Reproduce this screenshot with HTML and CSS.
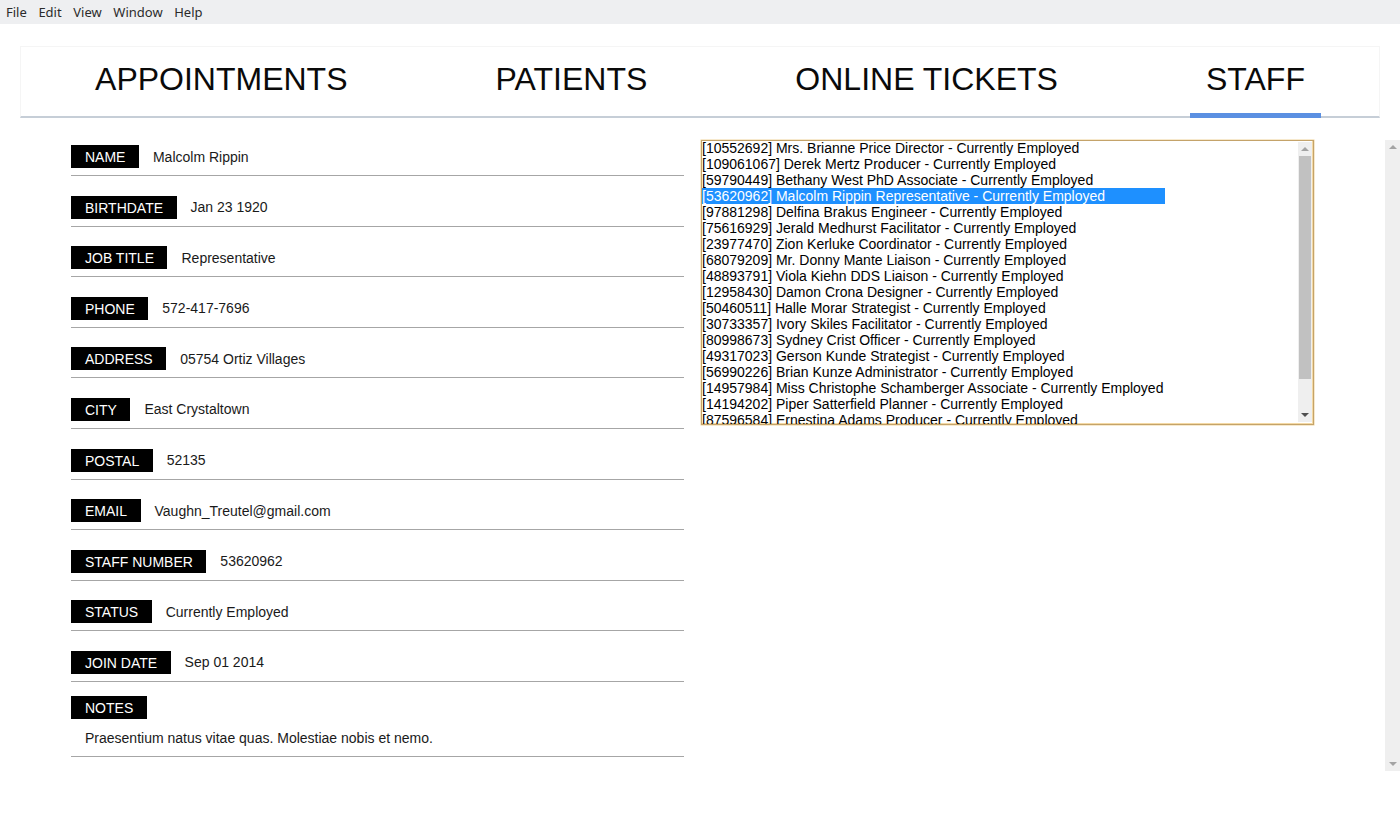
FILE: index.html
```html
<!DOCTYPE html>
<html>
<head>
<meta charset="utf-8">
<title>Staff</title>
<link rel="stylesheet" href="styles.css">
</head>
<body>
<div class="menubar">
  <span class="menu-item">File</span>
  <span class="menu-item">Edit</span>
  <span class="menu-item">View</span>
  <span class="menu-item">Window</span>
  <span class="menu-item">Help</span>
</div>

<div class="page">
  <nav class="tabs">
    <div class="tab">APPOINTMENTS</div>
    <div class="tab">PATIENTS</div>
    <div class="tab">ONLINE TICKETS</div>
    <div class="tab active">STAFF</div>
  </nav>

  <div class="main">
    <div class="content">
      <div class="form">
        <div class="field"><span class="label">NAME</span><span class="value">Malcolm Rippin</span></div>
        <div class="field"><span class="label">BIRTHDATE</span><span class="value">Jan 23 1920</span></div>
        <div class="field"><span class="label">JOB TITLE</span><span class="value">Representative</span></div>
        <div class="field"><span class="label">PHONE</span><span class="value">572-417-7696</span></div>
        <div class="field"><span class="label">ADDRESS</span><span class="value">05754 Ortiz Villages</span></div>
        <div class="field"><span class="label">CITY</span><span class="value">East Crystaltown</span></div>
        <div class="field"><span class="label">POSTAL</span><span class="value">52135</span></div>
        <div class="field"><span class="label">EMAIL</span><span class="value">Vaughn_Treutel@gmail.com</span></div>
        <div class="field"><span class="label">STAFF NUMBER</span><span class="value">53620962</span></div>
        <div class="field"><span class="label">STATUS</span><span class="value">Currently Employed</span></div>
        <div class="field field-last"><span class="label">JOIN DATE</span><span class="value">Sep 01 2014</span></div>
        <div class="notes">
          <span class="label">NOTES</span>
          <p class="notes-text">Praesentium natus vitae quas. Molestiae nobis et nemo.</p>
        </div>
      </div>

      <div class="listbox">
        <div class="list-viewport">
          <div class="list-items">
            <div class="item">[10552692] Mrs. Brianne Price Director - Currently Employed</div>
            <div class="item">[109061067] Derek Mertz Producer - Currently Employed</div>
            <div class="item">[59790449] Bethany West PhD Associate - Currently Employed</div>
            <div class="item selected">[53620962] Malcolm Rippin Representative - Currently Employed</div>
            <div class="item">[97881298] Delfina Brakus Engineer - Currently Employed</div>
            <div class="item">[75616929] Jerald Medhurst Facilitator - Currently Employed</div>
            <div class="item">[23977470] Zion Kerluke Coordinator - Currently Employed</div>
            <div class="item">[68079209] Mr. Donny Mante Liaison - Currently Employed</div>
            <div class="item">[48893791] Viola Kiehn DDS Liaison - Currently Employed</div>
            <div class="item">[12958430] Damon Crona Designer - Currently Employed</div>
            <div class="item">[50460511] Halle Morar Strategist - Currently Employed</div>
            <div class="item">[30733357] Ivory Skiles Facilitator - Currently Employed</div>
            <div class="item">[80998673] Sydney Crist Officer - Currently Employed</div>
            <div class="item">[49317023] Gerson Kunde Strategist - Currently Employed</div>
            <div class="item">[56990226] Brian Kunze Administrator - Currently Employed</div>
            <div class="item">[14957984] Miss Christophe Schamberger Associate - Currently Employed</div>
            <div class="item">[14194202] Piper Satterfield Planner - Currently Employed</div>
            <div class="item">[87596584] Ernestina Adams Producer - Currently Employed</div>
          </div>
        </div>
        <div class="vscroll">
          <span class="arrow-up"></span>
          <div class="track"><div class="thumb"></div></div>
          <span class="arrow-down dark"></span>
        </div>
      </div>
    </div>

    <div class="page-scroll">
      <span class="arrow-up"></span>
      <div class="track"></div>
      <span class="arrow-down"></span>
    </div>
  </div>
</div>
</body>
</html>
```

FILE: styles.css
```css
* { box-sizing: border-box; }

html, body {
  margin: 0;
  padding: 0;
  background: #ffffff;
  width: 1400px;
  height: 840px;
  overflow: hidden;
}

body {
  font-family: "Liberation Sans", Arial, sans-serif;
  color: #111;
}

/* Menu bar */
.menubar {
  height: 24px;
  background: #eeeff1;
  display: flex;
  align-items: center;
  font-family: "Noto Sans", "Open Sans", sans-serif;
  font-size: 13px;
  color: #2b2b2b;
}
.menu-item {
  padding: 0 5.6px 0 6px;
  line-height: 24px;
}

/* Page */
.page {
  padding: 22px 0 0 20px;
}

/* Tabs */
.tabs {
  width: 1360px;
  display: flex;
  justify-content: space-around;
  border: 1px solid #f5f5f5;
  border-bottom: 2px solid #c6ced7;
}
.tab {
  font-size: 32px;
  line-height: 37px;
  padding: 14px 16px 15px;
  border-bottom: 5px solid transparent;
  margin-bottom: -2px;
  color: #0a0a0a;
}
.tab.active {
  border-bottom-color: #5b90e2;
}

/* Main area */
.main {
  display: flex;
  padding-top: 22px;
}
.content {
  width: 1365px;
  display: flex;
  align-items: flex-start;
  padding-left: 51px;
  gap: 17px;
}

/* Form */
.form {
  width: 613px;
  padding-top: 5px;
}
.field {
  display: flex;
  align-items: center;
  padding-bottom: 7px;
  border-bottom: 1px solid #a6a6a6;
  margin-bottom: 19.6px;
}
.field-last {
  margin-bottom: 14px;
}
.label {
  display: inline-block;
  background: #000;
  color: #fff;
  font-size: 14px;
  height: 23px;
  line-height: 24px;
  padding: 0 13.5px 0 14px;
}
.value {
  margin-left: 14px;
  font-size: 14px;
  color: #1a1a1a;
}
.notes {
  border-bottom: 1px solid #a6a6a6;
}
.notes-text {
  margin: 0;
  padding: 11px 14px 10px;
  font-size: 14px;
  line-height: 16px;
  color: #1a1a1a;
}

/* Listbox */
.listbox {
  width: 613px;
  height: 285px;
  display: flex;
  border: 1px solid #c4a36a;
  box-shadow: inset -1px -1px 0 #f4d9a4, 0 0 0 0.5px #f0d49c;
  background: #fff;
}
.list-viewport {
  flex: 1;
  overflow: hidden;
}
.list-items {
  width: max-content;
  margin-top: -1px;
  font-size: 14px;
  line-height: 16px;
  color: #000;
}
.item {
  white-space: nowrap;
  height: 16px;
  padding-right: 2px;
}
.item.selected {
  background: #1e90ff;
  color: #fff;
}

/* Scrollbars */
.vscroll, .page-scroll {
  display: flex;
  flex-direction: column;
  align-items: center;
  background: #efefef;
}
.vscroll {
  width: 14px;
  margin: 1px 1px 2px 0;
}
.vscroll .track {
  flex: 1;
  min-height: 0;
  width: 100%;
  padding: 0 1px;
  overflow: hidden;
}
.thumb {
  height: 223px;
  background: #c1c1c1;
}
.page-scroll {
  width: 15px;
  height: 631px;
}
.page-scroll .track {
  flex: 1;
}
.arrow-up, .arrow-down {
  flex: none;
  width: 0;
  height: 0;
  border-left: 4px solid transparent;
  border-right: 4px solid transparent;
  margin: 5px 0;
}
.arrow-up {
  border-bottom: 4px solid #a3a3a3;
}
.arrow-down {
  border-top: 4px solid #a3a3a3;
}
.arrow-down.dark {
  border-top-color: #505050;
}
```
